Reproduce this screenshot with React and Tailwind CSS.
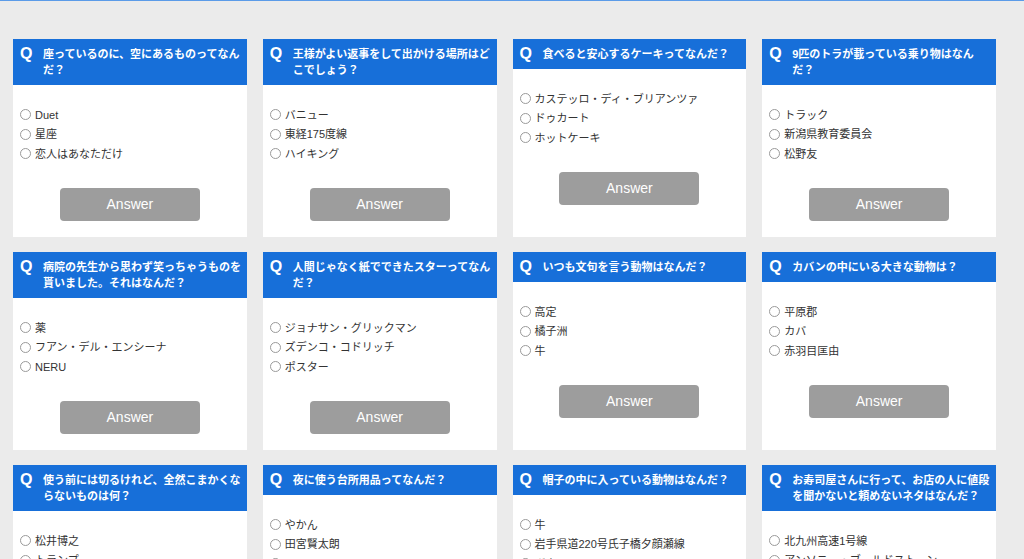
import React, { useState } from "react";

// ------------------- QUIZ DATA -------------------
const quizzes = [
  {
    id: 1,
    question: "座っているのに、空にあるものってなんだ？",
    options: ["Duet", "星座", "恋人はあなただけ"],
  },
  {
    id: 2,
    question: "王様がよい返事をして出かける場所はどこでしょう？",
    options: ["バニュー", "東経175度線", "ハイキング"],
  },
  {
    id: 3,
    question: "食べると安心するケーキってなんだ？",
    options: ["カステッロ・ディ・ブリアンツァ", "ドゥカート", "ホットケーキ"],
  },
  {
    id: 4,
    question: "9匹のトラが載っている乗り物はなんだ？",
    options: ["トラック", "新潟県教育委員会", "松野友"],
  },
  {
    id: 5,
    question: "病院の先生から思わず笑っちゃうものを貰いました。それはなんだ？",
    options: ["薬", "フアン・デル・エンシーナ", "NERU"],
  },
  {
    id: 6,
    question: "人間じゃなく紙でできたスターってなんだ？",
    options: ["ジョナサン・グリックマン", "ズデンコ・コドリッチ", "ポスター"],
  },
  {
    id: 7,
    question: "いつも文句を言う動物はなんだ？",
    options: ["高定", "橘子洲", "牛"],
  },
  {
    id: 8,
    question: "カバンの中にいる大きな動物は？",
    options: ["平原郡", "カバ", "赤羽目匡由"],
  },
  {
    id: 9,
    question: "使う前には切るけれど、全然こまかくならないものは何？",
    options: ["松井博之", "トランプ", "ラ・ロシェル"],
  },
  {
    id: 10,
    question: "夜に使う台所用品ってなんだ？",
    options: ["やかん", "田宮賢太朗", "ナイフ"],
  },
  {
    id: 11,
    question: "帽子の中に入っている動物はなんだ？",
    options: ["牛", "岩手県道220号氏子橋夕顔瀬線", "ボウシ"],
  },
  {
    id: 12,
    question: "お寿司屋さんに行って、お店の人に値段を聞かないと頼めないネタはなんだ？",
    options: ["北九州高速1号線", "アンソニー・ブールドストーン", "時価"],
  },
];

const font = "font-['Liberation_Sans','Noto_Sans_CJK_JP',sans-serif]";

const QuizCard = ({ quiz }) => {
  const [picked, setPicked] = useState(null);

  return (
    <div className="bg-white flex flex-col">
      {/* Header */}
      <div className="bg-[#176fd9] flex items-start pl-[7px] pr-[4px] py-[7px] text-white">
        <span className="w-[23px] shrink-0 text-[16px] leading-[16px] font-bold">
          Q
        </span>
        <p className="text-[11px] leading-[16px] font-bold">{quiz.question}</p>
      </div>

      {/* Options */}
      <div className="pt-[20px] pl-[7px]">
        {quiz.options.map((opt, i) => (
          <label
            key={opt}
            className="flex items-center h-[19.5px] text-[11px] text-[#333] cursor-pointer"
          >
            <input
              type="radio"
              name={`quiz-${quiz.id}`}
              checked={picked === i}
              onChange={() => setPicked(i)}
              className="appearance-none w-[11px] h-[11px] rounded-full border border-[#9a9a9a] bg-white mr-[4px] checked:border-[3px] checked:border-[#176fd9]"
            />
            {opt}
          </label>
        ))}
      </div>

      {/* Answer */}
      <div className="flex justify-center mt-[24.5px] pb-[16px]">
        <button className="w-[140px] h-[33px] rounded-[4px] bg-[#9d9d9d] text-white text-[14px] hover:bg-[#8d8d8d]">
          Answer
        </button>
      </div>
    </div>
  );
};

const App = () => {
  return (
    <div
      className={`min-h-screen bg-[#ebebeb] border-t border-[#5b9be8] pt-[38px] pl-[13px] ${font}`}
    >
      <div className="w-[983px] grid grid-cols-4 gap-x-[16px] gap-y-[15px] pb-6">
        {quizzes.map((quiz) => (
          <QuizCard key={quiz.id} quiz={quiz} />
        ))}
      </div>
    </div>
  );
};

export default App;
